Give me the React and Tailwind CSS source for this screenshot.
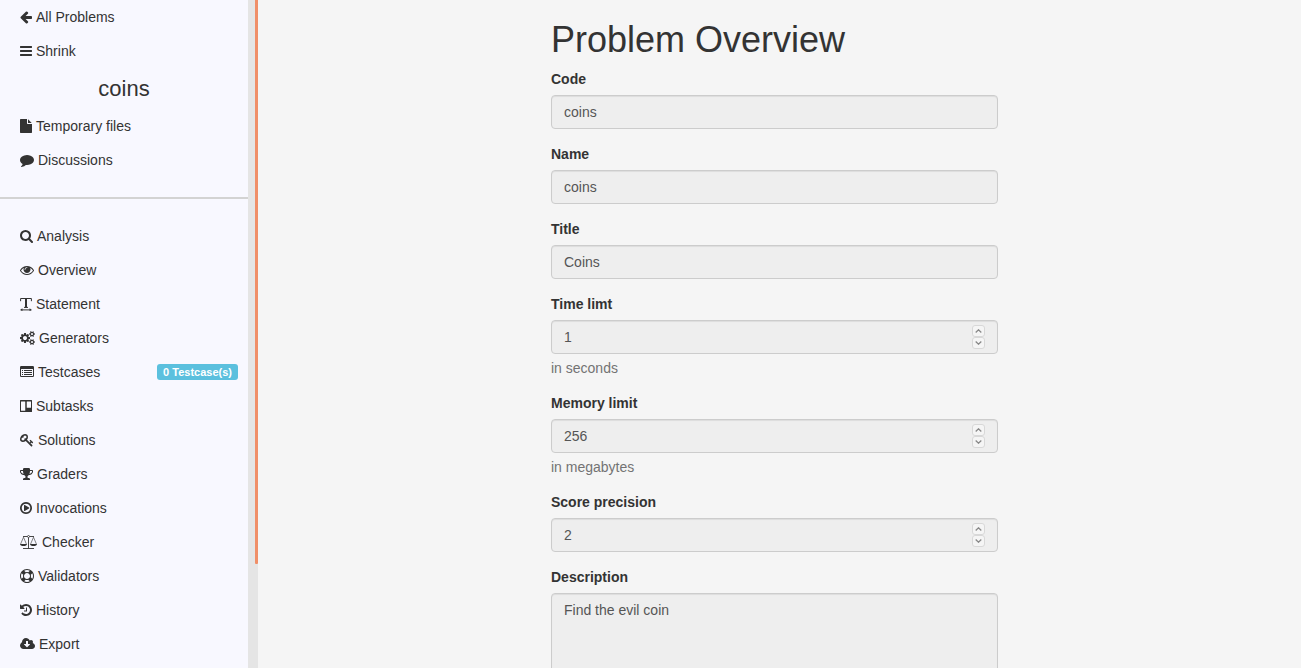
import React from "react";

function Glyph({ viewBox = "128 0 1536 1792", className = "w-3", d }) {
  return (
    <svg viewBox={viewBox} className={`h-3.5 shrink-0 ${className}`} fill="currentColor" aria-hidden="true">
      <path d={d} />
    </svg>
  );
}

const FULL = { viewBox: "0 0 1792 1792", className: "w-3.5" };
const MID = { viewBox: "64 0 1664 1792", className: "w-[13px]" };
const WIDE = { viewBox: "0 0 1920 1792", className: "w-[15px]" };

const ArrowLeft = () => (
  <Glyph d="M1664 896v128q0 53-32.5 90.5t-84.5 37.5h-704l293 294q38 36 38 90t-38 90l-75 76q-37 37-90 37-52 0-91-37l-651-652q-37-37-37-90 0-52 37-91l651-650q38-38 91-38 52 0 90 38l75 74q38 38 38 91t-38 91l-293 293h704q52 0 84.5 37.5t32.5 90.5z" />
);
const Bars = () => (
  <Glyph d="M1664 1344v128q0 26-19 45t-45 19h-1408q-26 0-45-19t-19-45v-128q0-26 19-45t45-19h1408q26 0 45 19t19 45zm0-512v128q0 26-19 45t-45 19h-1408q-26 0-45-19t-19-45v-128q0-26 19-45t45-19h1408q26 0 45 19t19 45zm0-512v128q0 26-19 45t-45 19h-1408q-26 0-45-19t-19-45v-128q0-26 19-45t45-19h1408q26 0 45 19t19 45z" />
);
const File = () => (
  <Glyph d="M1152 512v-472q22 14 36 28l408 408q14 14 28 36h-472zm-128 32q0 40 28 68t68 28h544v1056q0 40-28 68t-68 28h-1344q-40 0-68-28t-28-68v-1600q0-40 28-68t68-28h800v544z" />
);
const Comment = () => (
  <Glyph {...FULL} d="M1792 896q0 174-120 321.5t-326 233-450 85.5q-70 0-145-8-198 175-460 242-49 14-114 22-17 2-30.5-9t-17.5-29v-1q-3-4-.5-12t2-10 4.5-9.5l6-9 7-8.5 8-9q7-8 31-34.5t34.5-38 31-39.5 32.5-51 27-59 26-76q-157-89-247.5-220t-90.5-281q0-130 71-248.5t191-204.5 286-136.5 348-50.5q244 0 450 85.5t326 233 120 321.5z" />
);
const Search = () => (
  <Glyph {...MID} d="M1216 832q0-185-131.5-316.5t-316.5-131.5-316.5 131.5-131.5 316.5 131.5 316.5 316.5 131.5 316.5-131.5 131.5-316.5zm512 832q0 52-38 90t-90 38q-54 0-90-38l-343-342q-179 124-399 124-143 0-273.5-55.5t-225-150-150-225-55.5-273.5 55.5-273.5 150-225 225-150 273.5-55.5 273.5 55.5 225 150 150 225 55.5 273.5q0 220-124 399l343 343q37 37 37 90z" />
);
const Eye = () => (
  <Glyph {...FULL} d="M1664 960q-152-236-381-353 61 104 61 225 0 185-131.5 316.5t-316.5 131.5-316.5-131.5-131.5-316.5q0-121 61-225-229 117-381 353 133 205 333.5 326.5t434.5 121.5 434.5-121.5 333.5-326.5zm-720-384q0-20-14-34t-34-14q-125 0-214.5 89.5t-89.5 214.5q0 20 14 34t34 14 34-14 14-34q0-86 61-147t147-61q20 0 34-14t14-34zm848 384q0 34-20 69-140 230-376.5 368.5t-499.5 138.5-499.5-139-376.5-368q-20-35-20-69t20-69q140-229 376.5-368t499.5-139 499.5 139 376.5 368q20 35 20 69z" />
);
const TextWidth = () => (
  <svg viewBox="0 0 12 14" className="h-3.5 w-3 shrink-0" fill="none" stroke="currentColor" aria-hidden="true">
    <path strokeWidth="1" d="M.6 4.2V1.5h10.8v2.7M4 10.4h4M2 12.9h8" />
    <path strokeWidth="2" d="M6 1.5v9" />
    <path fill="currentColor" stroke="none" d="M0 12.9l2.4-1.7v3zM12 12.9l-2.4-1.7v3z" />
  </svg>
);
const Cogs = () => (
  <Glyph {...WIDE} d="M896 896q0-106-75-181t-181-75-181 75-75 181 75 181 181 75 181-75 75-181zm768 512q0-52-38-90t-90-38-90 38-38 90q0 53 37.5 90.5t90.5 37.5 90.5-37.5 37.5-90.5zm0-1024q0-52-38-90t-90-38-90 38-38 90q0 53 37.5 90.5t90.5 37.5 90.5-37.5 37.5-90.5zm-384 421v185q0 10-7 19.5t-16 10.5l-155 24q-11 35-32 76 34 48 90 115 7 11 7 20 0 12-7 19-23 30-82.5 89.5t-78.5 59.5q-11 0-21-7l-115-90q-37 19-77 31-11 108-23 155-7 24-30 24h-186q-11 0-20-7.5t-10-17.5l-23-153q-34-10-75-31l-118 89q-7 7-20 7-11 0-21-8-144-133-144-160 0-9 7-19 10-14 41-53t47-61q-23-44-35-82l-152-24q-10-1-17-9.5t-7-19.5v-185q0-10 7-19.5t16-10.5l155-24q11-35 32-76-34-48-90-115-7-11-7-20 0-12 7-20 22-30 82-89t79-59q11 0 21 7l115 90q34-18 77-32 11-108 23-154 7-24 30-24h186q11 0 20 7.5t10 17.5l23 153q34 10 75 31l118-89q8-7 20-7 11 0 21 8 144 133 144 160 0 8-7 19-12 16-42 54t-45 60q23 48 34 82l152 23q10 2 17 10.5t7 19.5zm640 533v140q0 16-149 31-12 27-30 52 51 113 51 138 0 4-4 7-122 71-124 71-8 0-46-47t-52-68q-20 2-30 2t-30-2q-14 21-52 68t-46 47q-2 0-124-71-4-3-4-7 0-25 51-138-18-25-30-52-149-15-149-31v-140q0-16 149-31 13-29 30-52-51-113-51-138 0-4 4-7 4-2 35-20t59-34 30-16q8 0 46 46.5t52 67.5q20-2 30-2t30 2q51-71 92-112l6-2q4 0 124 70 4 3 4 7 0 25-51 138 17 23 30 52 149 15 149 31zm0-1024v140q0 16-149 31-12 27-30 52 51 113 51 138 0 4-4 7-122 71-124 71-8 0-46-47t-52-68q-20 2-30 2t-30-2q-14 21-52 68t-46 47q-2 0-124-71-4-3-4-7 0-25 51-138-18-25-30-52-149-15-149-31v-140q0-16 149-31 13-29 30-52-51-113-51-138 0-4 4-7 4-2 35-20t59-34 30-16q8 0 46 46.5t52 67.5q20-2 30-2t30 2q51-71 92-112l6-2q4 0 124 70 4 3 4 7 0 25-51 138 17 23 30 52 149 15 149 31z" />
);
const ListAlt = () => (
  <svg viewBox="0 0 1792 1792" className="h-3.5 w-3.5 shrink-0" fill="currentColor" aria-hidden="true">
    <path fillRule="evenodd" d="M160 128h1472a160 160 0 0 1 160 160v1088a160 160 0 0 1-160 160h-1472a160 160 0 0 1-160-160v-1088a160 160 0 0 1 160-160zM160 512a32 32 0 0 0-32 32v832a32 32 0 0 0 32 32h1472a32 32 0 0 0 32-32v-832a32 32 0 0 0-32-32z" />
    <path d="M256 640h128v128h-128zM256 896h128v128h-128zM256 1152h128v128h-128zM512 640h1024v128h-1024zM512 896h1024v128h-1024zM512 1152h1024v128h-1024z" />
  </svg>
);
const Board = () => (
  <svg viewBox="0 0 1536 1792" className="h-3.5 w-3 shrink-0" fill="currentColor" aria-hidden="true">
    <path fillRule="evenodd" d="M64 128h1408a64 64 0 0 1 64 64v1408a64 64 0 0 1-64 64h-1408a64 64 0 0 1-64-64v-1408a64 64 0 0 1 64-64zM160 320a32 32 0 0 0-32 32v1120a32 32 0 0 0 32 32h480a32 32 0 0 0 32-32v-1120a32 32 0 0 0-32-32zM896 320a32 32 0 0 0-32 32v736a32 32 0 0 0 32 32h480a32 32 0 0 0 32-32v-736a32 32 0 0 0-32-32z" />
  </svg>
);
const Key = () => (
  <Glyph {...FULL} d="M832 512q0-80-56-136t-136-56-136 56-56 136q0 42 19 83-41-19-83-19-80 0-136 56t-56 136 56 136 136 56 136-56 56-136q0-42-19-83 41 19 83 19 80 0 136-56t56-136zm851 704q0 17-49 66t-66 49q-9 0-28.5-16t-36.5-33-38.5-40-24.5-26l-96 96 220 220q28 28 28 68 0 42-39 81t-81 39q-40 0-68-28l-671-671q-176 131-365 131-163 0-265.5-102.5t-102.5-265.5q0-160 95-313t248-248 313-95q163 0 265.5 102.5t102.5 265.5q0 189-131 365l355 355 96-96q-3-3-26-24.5t-40-38.5-33-36.5-16-28.5q0-17 49-66t66-49q13 0 23 10 6 6 46 44.5t82 79.5 86.5 86 73 78 28.5 41z" />
);
const Trophy = () => (
  <Glyph {...MID} d="M522 883q-74-162-74-371h-256v96q0 78 94.5 162t235.5 113zm1078-275v-96h-256q0 209-74 371 141-29 235.5-113t94.5-162zm128-128v128q0 71-41.5 143t-112 130-173 97.5-215.5 44.5q-42 54-95 95-38 34-52.5 72.5t-14.5 89.5q0 54 30.5 91t97.5 37q75 0 133.5 45.5t58.5 114.5v64q0 14-9 23t-23 9h-832q-14 0-23-9t-9-23v-64q0-69 58.5-114.5t133.5-45.5q67 0 97.5-37t30.5-91q0-51-14.5-89.5t-52.5-72.5q-53-41-95-95-113-5-215.5-44.5t-173-97.5-112-130-41.5-143v-128q0-40 28-68t68-28h288v-96q0-66 47-113t113-47h576q66 0 113 47t47 113v96h288q40 0 68 28t28 68z" />
);
const PlayCircle = () => (
  <Glyph d="M1312 896q0 37-32 55l-544 320q-15 9-32 9-16 0-32-8-32-19-32-56v-640q0-37 32-56 33-18 64 1l544 320q32 18 32 55zm128 0q0-148-73-273t-198-198-273-73-273 73-198 198-73 273 73 273 198 198 273 73 273-73 198-198 73-273zm224 0q0 209-103 385.5t-279.5 279.5-385.5 103-385.5-103-279.5-279.5-103-385.5 103-385.5 279.5-279.5 385.5-103 385.5 103 279.5 279.5 103 385.5z" />
);
const Scale = () => (
  <svg viewBox="0 0 18 14" className="h-3.5 w-[18px] shrink-0" fill="none" stroke="currentColor" aria-hidden="true">
    <path strokeWidth="0.9" d="M3 1.5h4.4M9.6 1.5H14M8.5 2.6v10.8M3 13.5h11" />
    <circle cx="8.5" cy="1.5" r="1" strokeWidth="0.8" />
    <path strokeWidth="0.6" d="M3.5 2.2L.6 9M3.5 2.2L6.4 9M13.5 2.2L10.6 9M13.5 2.2L16.4 9" />
    <path fill="currentColor" stroke="none" d="M0 9h7q-.3 2-3.5 2T0 9zM10 9h7q-.3 2-3.5 2T10 9z" />
  </svg>
);
const LifeRing = () => (
  <Glyph {...FULL} d="M896 0q182 0 348 71t286 191 191 286 71 348-71 348-191 286-286 191-348 71-348-71-286-191-191-286-71-348 71-348 191-286 286-191 348-71zm0 128q-190 0-361 90l194 194q82-28 167-28t167 28l194-194q-171-90-361-90zm-678 1129l194-194q-28-82-28-167t28-167l-194-194q-90 171-90 361t90 361zm678 407q190 0 361-90l-194-194q-82 28-167 28t-167-28l-194 194q171 90 361 90zm0-384q159 0 271.5-112.5t112.5-271.5-112.5-271.5-271.5-112.5-271.5 112.5-112.5 271.5 112.5 271.5 271.5 112.5zm484-217l194 194q90-171 90-361t-90-361l-194 194q28 82 28 167t-28 167z" />
);
const History = () => (
  <Glyph d="M1664 896q0 156-61 298t-164 245-245 164-298 61q-172 0-327-72.5t-264-204.5q-7-10-6.5-22.5t8.5-20.5l137-138q10-9 25-9 16 2 23 12 73 95 179 147t225 52q104 0 198.5-40.5t163.5-109.5 109.5-163.5 40.5-198.5-40.5-198.5-109.5-163.5-163.5-109.5-198.5-40.5q-98 0-188 35.5t-160 101.5l137 138q31 30 14 69-17 40-59 40h-448q-26 0-45-19t-19-45v-448q0-42 40-59 39-17 69 14l130 129q107-101 244.5-156.5t284.5-55.5q156 0 298 61t245 164 164 245 61 298zm-640-288v448q0 14-9 23t-23 9h-320q-14 0-23-9t-9-23v-64q0-14 9-23t23-9h224v-352q0-14 9-23t23-9h64q14 0 23 9t9 23z" />
);
const CloudDownload = () => (
  <Glyph {...WIDE} d="M1280 928q0-14-9-23t-23-9h-224v-352q0-13-9.5-22.5t-22.5-9.5h-192q-13 0-22.5 9.5t-9.5 22.5v352h-224q-13 0-22.5 9.5t-9.5 22.5q0 14 9 23l352 352q9 9 23 9t23-9l351-351q10-12 10-24zm640 224q0 159-112.5 271.5t-271.5 112.5h-1088q-185 0-316.5-131.5t-131.5-316.5q0-130 70-240t188-165q-2-30-2-43 0-212 150-362t362-150q156 0 285.5 87t188.5 231q71-62 166-62 106 0 181 75t75 181q0 76-41 138 130 31 213.5 135.5t83.5 238.5z" />
);

const sections = [
  { label: "Analysis", icon: Search },
  { label: "Overview", icon: Eye },
  { label: "Statement", icon: TextWidth },
  { label: "Generators", icon: Cogs },
  { label: "Testcases", icon: ListAlt, badge: "0 Testcase(s)" },
  { label: "Subtasks", icon: Board },
  { label: "Solutions", icon: Key },
  { label: "Graders", icon: Trophy },
  { label: "Invocations", icon: PlayCircle },
  { label: "Checker", icon: Scale },
  { label: "Validators", icon: LifeRing },
  { label: "History", icon: History },
  { label: "Export", icon: CloudDownload },
];

const ITEM = "flex w-full items-center gap-1 py-[7px] pr-2.5 pl-5 text-left";

function NavLink({ label, icon: Icon, badge }) {
  return (
    <li>
      <a href="#" className={ITEM}>
        <Icon />
        <span>{label}</span>
        {badge && (
          <span className="ml-auto rounded-[3px] bg-[#5bc0de] px-1.5 text-[11px] leading-4 font-bold text-white">
            {badge}
          </span>
        )}
      </a>
    </li>
  );
}

const CONTROL =
  "block w-full rounded border border-[#ccc] bg-[#eee] px-3 text-[#555] shadow-[inset_0_1px_1px_rgba(0,0,0,0.075)] outline-none";

function StepButton({ label, d }) {
  return (
    <button
      type="button"
      disabled
      aria-label={label}
      className="flex h-3 w-[13px] items-center justify-center rounded-[3px] border border-[#d8d8d8] bg-[#f5f5f5] text-[#888]"
    >
      <svg viewBox="0 0 7 4" className="h-1 w-[7px]" fill="none" stroke="currentColor" strokeWidth="1.3" aria-hidden="true">
        <path d={d} />
      </svg>
    </button>
  );
}

function Field({ id, label, value, help, number }) {
  return (
    <div className="mb-[15px]">
      <label htmlFor={id} className="mb-1.5 block font-bold">
        {label}
      </label>
      <div className="relative">
        <input
          id={id}
          type={number ? "number" : "text"}
          defaultValue={value}
          readOnly
          className={`${CONTROL} h-[34px] [appearance:textfield] [&::-webkit-inner-spin-button]:appearance-none`}
        />
        {number && (
          <div className="absolute inset-y-0 right-[13px] flex flex-col justify-center">
            <StepButton label={`Increase ${label}`} d="M.7 3.4L3.5.8l2.8 2.6" />
            <StepButton label={`Decrease ${label}`} d="M.7.6l2.8 2.6L6.3.6" />
          </div>
        )}
      </div>
      {help && <p className="mt-1 text-[#737373]">{help}</p>}
    </div>
  );
}

export default function App() {
  return (
    <div className="flex h-screen overflow-hidden bg-[#f5f5f5] font-['Liberation_Sans',Arial,sans-serif] text-[14px] leading-5 text-[#333]">
      <aside className="flex shrink-0">
        <nav className="w-[248px] overflow-hidden bg-[#f8f8ff]">
          <ul>
            <NavLink label="All Problems" icon={ArrowLeft} />
            <li>
              <button type="button" className={ITEM}>
                <Bars />
                <span>Shrink</span>
              </button>
            </li>
          </ul>
          <h4 className="py-2 text-center text-[22px] leading-[25px]">coins</h4>
          <ul>
            <NavLink label="Temporary files" icon={File} />
            <NavLink label="Discussions" icon={Comment} />
          </ul>
          <hr className="my-5 border-t-2 border-[#d3d3d3]" />
          <ul>
            {sections.map((item) => (
              <NavLink key={item.label} {...item} />
            ))}
          </ul>
        </nav>
        <div className="flex w-2.5 justify-end bg-[#e5e5e5]">
          <div className="h-[84.4%] w-[3px] rounded-b-[1px] bg-[#f08f68]" />
        </div>
      </aside>

      <main className="min-w-0 flex-1 overflow-hidden pr-2.5">
        <form className="mx-auto w-full max-w-[447px] pt-5">
          <h1 className="mb-[9px] text-[36px] leading-10">Problem Overview</h1>
          <Field id="code" label="Code" value="coins" />
          <Field id="name" label="Name" value="coins" />
          <Field id="title" label="Title" value="Coins" />
          <Field id="time" label="Time limt" value="1" help="in seconds" number />
          <Field id="memory" label="Memory limit" value="256" help="in megabytes" number />
          <Field id="precision" label="Score precision" value="2" number />
          <label htmlFor="description" className="mb-1.5 block font-bold">
            Description
          </label>
          <textarea
            id="description"
            rows={10}
            readOnly
            defaultValue="Find the evil coin"
            className={`${CONTROL} resize-none py-1.5`}
          />
        </form>
      </main>
    </div>
  );
}
